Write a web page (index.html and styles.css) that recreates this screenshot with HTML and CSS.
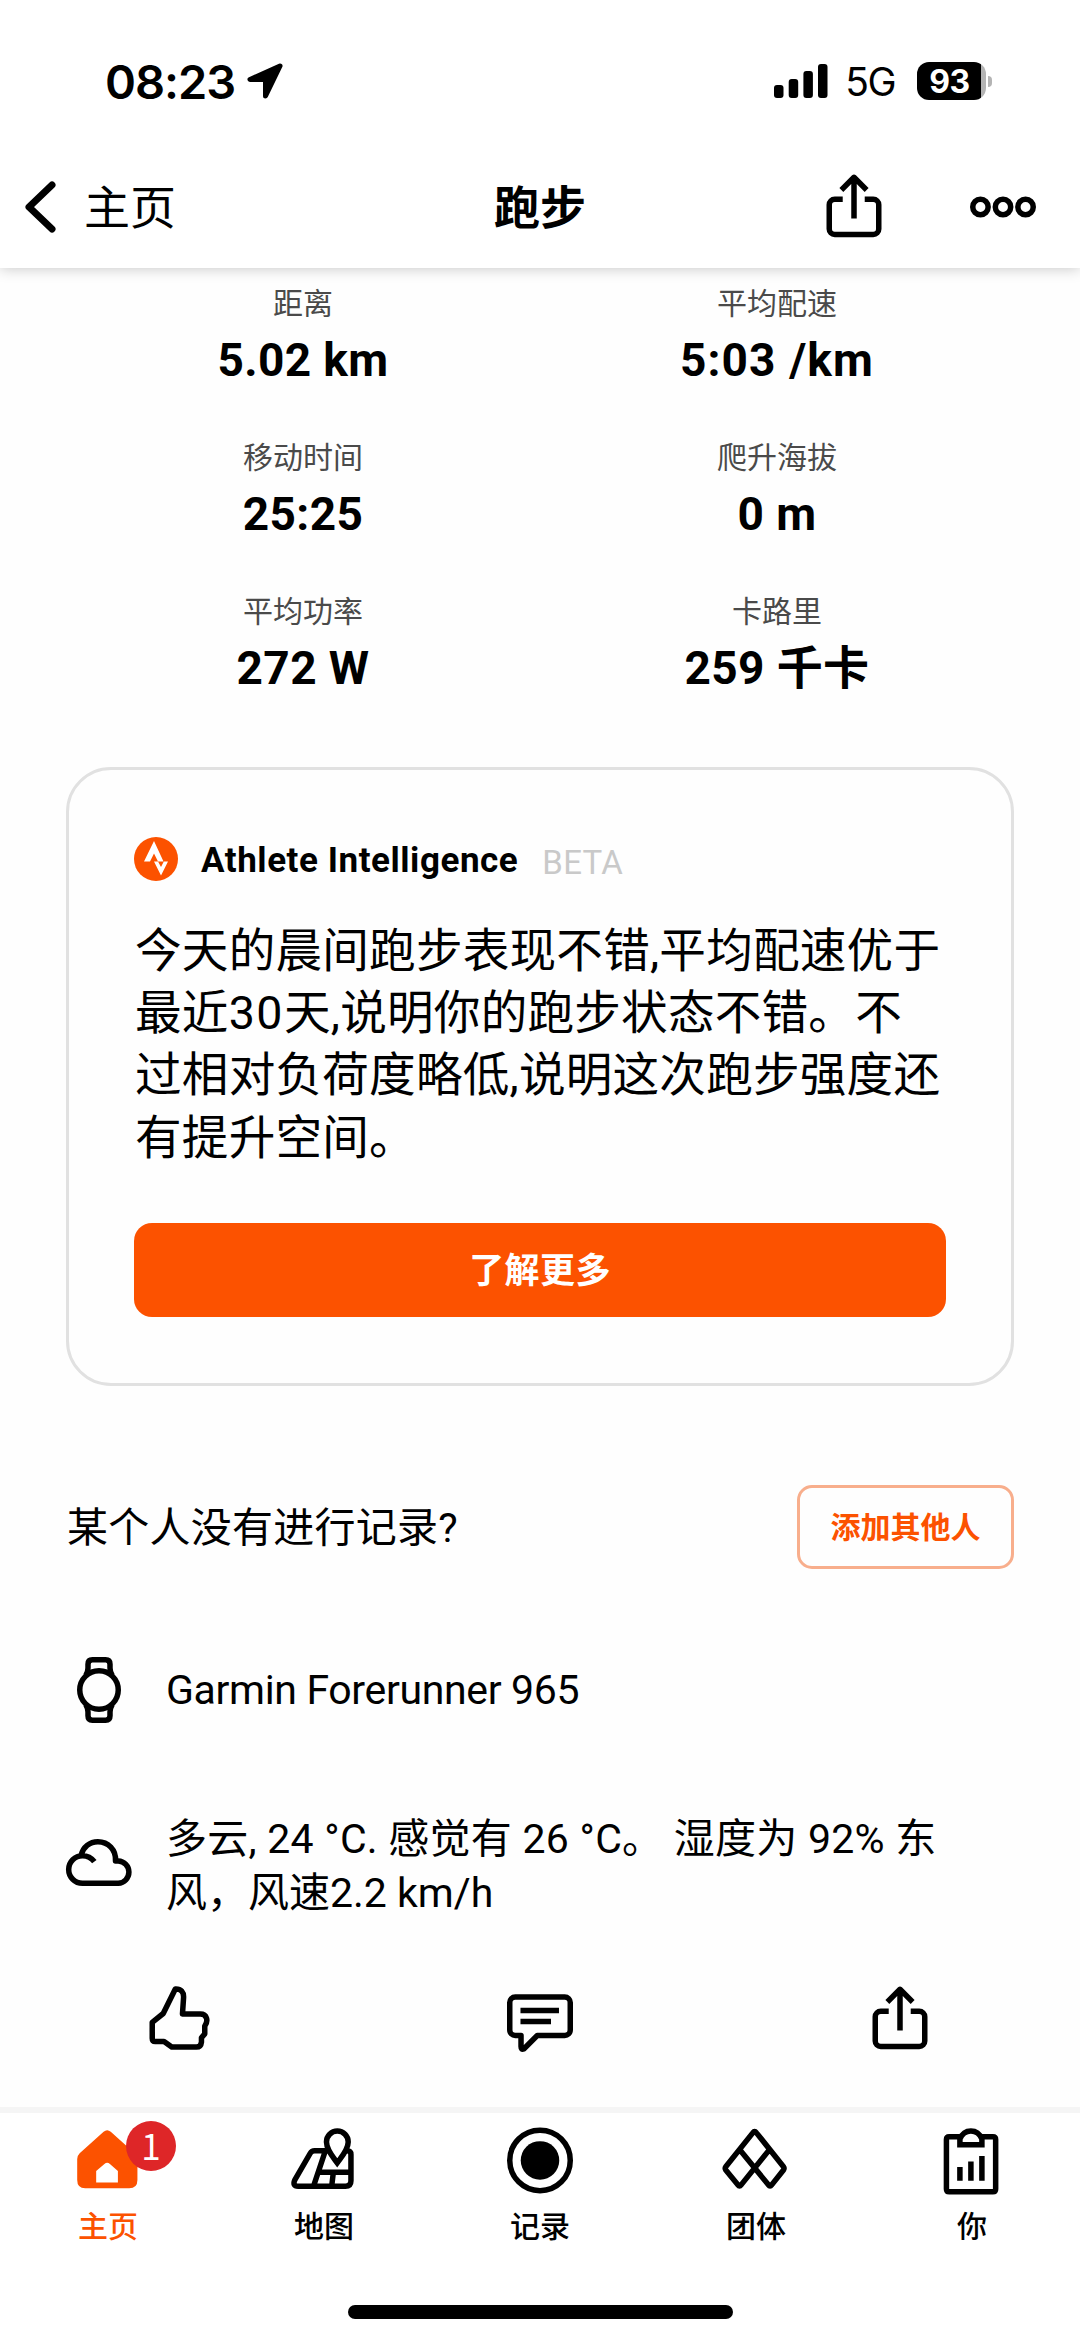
FILE: index.html
```html
<!DOCTYPE html>
<html lang="zh-CN">
<head>
<meta charset="utf-8">
<title>跑步</title>
<link rel="stylesheet" href="styles.css">
</head>
<body>
<div class="screen">
  <header class="header">
    <div class="status">
      <div class="status-left">
        <span class="clock">08:23</span>
        <svg class="location" viewBox="0 0 36 36"><path d="M33 3 L3 16.5 H18.5 V33 Z" fill="#000" stroke="#000" stroke-width="5" stroke-linejoin="round"/></svg>
      </div>
      <div class="status-right">
        <svg class="signal" viewBox="0 0 54 36"><rect x="0" y="22" width="9.5" height="13" rx="3"/><rect x="14.7" y="16" width="9.5" height="19" rx="3"/><rect x="29.4" y="8" width="9.5" height="27" rx="3"/><rect x="44" y="1" width="9.5" height="34" rx="3"/></svg>
        <span class="network">5G</span>
        <div class="battery"><span>93</span></div>
        <i class="battery-nub"></i>
      </div>
    </div>
    <nav class="nav">
      <a class="back">
        <svg class="chevron" viewBox="0 0 31 52"><path d="M27 4 L4 26 L27 48"/></svg>
        <span>主页</span>
      </a>
      <h1 class="title">跑步</h1>
      <div class="nav-actions">
        <svg class="icon" viewBox="0 0 24 24"><path d="M7.9 9.2H5a2 2 0 0 0-2 2V20a2 2 0 0 0 2 2H19a2 2 0 0 0 2-2V11.2a2 2 0 0 0-2-2H15.9M12 16.2V1.4M7.4 5.8 12 1.2l4.6 4.6"/></svg>
        <svg class="icon" viewBox="0 0 24 24"><circle cx="3.8" cy="12" r="2.8"/><circle cx="12" cy="12" r="2.8"/><circle cx="20.2" cy="12" r="2.8"/></svg>
      </div>
    </nav>
  </header>

  <main class="content">
    <section class="stats">
      <div class="stat"><span class="label">距离</span><b class="value">5.02 km</b></div>
      <div class="stat"><span class="label">平均配速</span><b class="value pace">5:03 /km</b></div>
      <div class="stat"><span class="label">移动时间</span><b class="value">25:25</b></div>
      <div class="stat"><span class="label">爬升海拔</span><b class="value">0 m</b></div>
      <div class="stat"><span class="label">平均功率</span><b class="value">272 W</b></div>
      <div class="stat"><span class="label">卡路里</span><b class="value">259 千卡</b></div>
    </section>

    <section class="card">
      <div class="card-head">
        <svg class="logo" viewBox="0 0 44 44"><circle cx="22" cy="22" r="22" fill="#fc5200"/><path fill="#fff" d="M20 4 L10 24.5 H16 L20 16.5 L24 24.5 H29.5 Z"/><path fill="#fff" d="M20 24.5 L27 38.5 L34 24.5 H29.8 L27 30 L24 24.5 Z"/></svg>
        <span class="card-title">Athlete Intelligence</span>
        <span class="beta">BETA</span>
      </div>
      <p class="summary">今天的晨间跑步表现不错,平均配速优于<br>最近<span class="number">30</span>天,说明你的跑步状态不错。不<br>过相对负荷度略低,说明这次跑步强度还<br>有提升空间。</p>
      <button class="more">了解更多</button>
    </section>

    <section class="others">
      <span class="others-text">某个人没有进行记录?</span>
      <button class="add">添加其他人</button>
    </section>

    <section class="detail device">
      <svg class="icon" viewBox="0 0 24 24"><circle cx="12" cy="12" r="7"/><path d="M7.2 6.7C7.8 5.7 8 5 8 4V2.6Q8 1 9.6 1H14.4Q16 1 16 2.6V4c0 1 .2 1.7.8 2.7M7.2 17.3C7.8 18.3 8 19 8 20v1.4Q8 23 9.6 23H14.4Q16 23 16 21.4V20c0-1 .2-1.7.8-2.7"/></svg>
      <span class="detail-text">Garmin Forerunner 965</span>
    </section>
    <section class="detail weather">
      <svg class="icon" viewBox="0 0 24 24"><path d="M10.3 11.9C9.2 10.4 7.8 9.7 6 9.7A5 5 0 0 0 6 19.75H19A4.08 4.08 0 0 0 19 11.6H18C18.3 7.5 15.3 4.6 11.6 4.6 8.6 4.6 6.2 6.5 5.5 9.5"/></svg>
      <span class="detail-text"><span class="conditions">多云, 24 °C. 感觉有 26 °C。 湿度为 92% 东</span><br>风，风速2.2 km/h</span>
    </section>

    <section class="actions">
      <svg class="icon" viewBox="0 0 24 24"><path d="M10.3 1.1C12.4 1 13.4 2.2 13.3 4.2L12.9 10.2H19.4C21.8 10.2 22.4 12.6 21 14.6V17.4L19.8 18.8V20.4Q19.6 22.2 18 22.2H9L6.2 20.2H3Q1.9 20.2 1.9 19V13.2L5.9 10Z"/></svg>
      <svg class="icon" viewBox="0 0 24 24"><path d="M5.1 18H3A2 2 0 0 1 1 16V6A2 2 0 0 1 3 4H21A2 2 0 0 1 23 6V16A2 2 0 0 1 21 18H11L6.1 22.9Q5.1 23.3 5.1 22ZM4.9 8.9H18.9M4.9 12.9H16"/></svg>
      <svg class="icon" viewBox="0 0 24 24"><path d="M7.9 9.2H5a2 2 0 0 0-2 2V20a2 2 0 0 0 2 2H19a2 2 0 0 0 2-2V11.2a2 2 0 0 0-2-2H15.9M12 16.2V1.4M7.4 5.8 12 1.2l4.6 4.6"/></svg>
    </section>
  </main>

  <footer class="tabbar">
    <div class="tabs">
      <a class="tab active">
        <span class="tab-icon">
          <svg class="icon" viewBox="0 0 24 24"><path class="solid" fill-rule="evenodd" d="M10.4 2.1Q11.7 1 13 2.1L21.7 9.9Q22.7 10.8 22.7 12V19.6Q22.7 22.6 19.7 22.6H3.7Q.8 22.6 .8 19.6V12Q.8 10.8 1.7 9.9ZM7.7 20.5H15.6V16.4L12.7 13.8Q11.7 13 10.7 13.8L7.7 16.4Z"/></svg>
          <i class="badge">1</i>
        </span>
        <span>主页</span>
      </a>
      <a class="tab">
        <svg class="icon" viewBox="0 0 24 24"><path d="M12.5 9H8.6Q7.5 9 7 9.9L1.4 19.6Q.4 21.9 2.6 21.9H19.8Q21.8 21.9 21.8 19.9V10.4Q21.8 9 20.4 9H12.5L8.2 21.9M9.9 16.8H21.8M15.4 16.8 14.8 21.9"/><path fill="#fff" d="M16.8 13.4C15.2 11.2 12.9 8.6 12.9 5.8A3.95 3.95 0 0 1 20.8 5.8C20.8 8.6 18.4 11.2 16.8 13.4Z" stroke-linejoin="miter"/></svg>
        <span>地图</span>
      </a>
      <a class="tab">
        <svg class="icon" viewBox="0 0 24 24"><circle cx="12" cy="12.5" r="11"/><circle class="solid" cx="12" cy="12.5" r="7"/></svg>
        <span>记录</span>
      </a>
      <a class="tab">
        <svg class="icon" viewBox="0 0 24 24"><path d="M10.9 2.4Q11.5 1.6 12.1 2.4L22 14.8Q22.4 15.4 22 16L17.7 21.4Q17.1 22.2 16.5 21.4L6.1 8.6M16.9 8.6 6.6 21.4Q6 22.2 5.4 21.4L1 16Q.6 15.4 1 14.8L10.9 2.4"/></svg>
        <span>团体</span>
      </a>
      <a class="tab">
        <svg class="icon" viewBox="0 0 24 24"><path d="M7.6 3.9H3.7Q2.7 3.9 2.7 4.9V22.9Q2.7 23.9 3.7 23.9H19.6Q20.6 23.9 20.6 22.9V4.9Q20.6 3.9 19.6 3.9H15.6M7.6 19.9V14.9M11.6 19.9V12.9M15.6 19.9V10.9"/><path stroke-linejoin="miter" d="M7.6 6.8V4.7C9.2 .8 14 .8 15.6 4.7V6.8Z"/></svg>
        <span>你</span>
      </a>
    </div>
    <div class="home-indicator"></div>
  </footer>
</div>
</body>
</html>
```
FILE: styles.css
```css
* { box-sizing: border-box; }
body {
  margin: 0;
  background: #fff;
  color: #000;
  font-family: Roboto, "Noto Sans CJK SC", sans-serif;
}
.screen { width: 1080px; height: 2341px; display: flex; flex-direction: column; background: #fefefe; overflow: hidden; }
button { font-family: inherit; padding: 0; }

.icon { width: 66px; height: 66px; flex: none; display: block; fill: none; stroke: #000; stroke-width: 2; stroke-linejoin: round; overflow: visible; }
.icon .solid { fill: currentColor; stroke: none; }

.header { height: 268px; flex: none; position: relative; background: #fff; box-shadow: 0 0 14px rgba(0, 0, 0, .24); }
.status { height: 162px; padding: 0 88px 0 105px; display: flex; align-items: center; justify-content: space-between; font-family: Inter, sans-serif; }
.status-left, .status-right { display: flex; align-items: center; }
.clock { font-size: 47px; font-weight: 600; letter-spacing: -1px; }
.location { width: 36px; height: 36px; margin-left: 12px; }
.signal { width: 54px; height: 36px; }
.network { font-size: 39px; margin-left: 17px; letter-spacing: -1.5px; }
.battery { width: 69px; height: 38px; margin-left: 22px; border-radius: 12px; background: linear-gradient(90deg, #000 64px, #b4b4b4 64px); display: flex; align-items: center; justify-content: center; color: #fff; font-size: 32px; font-weight: 700; letter-spacing: -.5px; padding-right: 4px; }
.battery-nub { width: 4px; height: 11px; margin-left: 2px; border-radius: 0 6px 6px 0; background: #b4b4b4; }

.nav { height: 90px; padding: 0 25px; display: grid; grid-template-columns: 1fr 200px 1fr; align-items: center; }
.back { display: flex; align-items: center; gap: 28px; font-size: 46px; }
.back span, .title { padding-bottom: 6px; }
.chevron { width: 31px; height: 52px; fill: none; stroke: #000; stroke-width: 7; stroke-linecap: round; stroke-linejoin: round; }
.title { margin: 0; text-align: center; font-size: 46px; font-weight: 700; }
.nav-actions { display: flex; justify-content: flex-end; gap: 83px; padding-right: 19px; }

.content { flex: 1; padding: 16px 66px 0; }
.stats { display: grid; grid-template-columns: 1fr 1fr; grid-auto-rows: 154px; height: 483px; }
.stat { display: flex; flex-direction: column; align-items: center; gap: 9px; }
.label { font-size: 30px; line-height: 40px; color: #4a4a4a; }
.value { font-size: 46px; line-height: 54px; font-weight: 700; letter-spacing: .4px; }
.pace { letter-spacing: 1.1px; }

.card { height: 619px; border: 3px solid #e1e1e1; border-radius: 45px; padding: 64px 65px 0; display: flex; flex-direction: column; }
.card-head { display: flex; align-items: center; height: 50px; }
.logo { width: 44px; height: 44px; }
.card-title { font-size: 35px; font-weight: 700; margin-left: 23px; padding-top: 3px; line-height: 50px; letter-spacing: .55px; }
.beta { font-size: 33px; color: #c9c9c9; margin-left: 24px; padding-top: 7px; line-height: 50px; letter-spacing: .3px; }
.summary { margin: 36px 0 0 1px; font-size: 46.6px; line-height: 62.2px; height: 249px; white-space: nowrap; letter-spacing: .22px; }
.number { letter-spacing: 1.5px; }
.more { margin-top: 54px; height: 94px; border: 0; border-radius: 18px; background: #fc5200; color: #fff; font-size: 35px; font-weight: 700; letter-spacing: .4px; padding-bottom: 5px; }

.others { margin-top: 99px; height: 84px; display: flex; align-items: center; justify-content: space-between; }
.others-text { font-size: 41px; letter-spacing: .25px; padding: 0 0 7px 1px; }
.add { width: 217px; height: 84px; border: 3px solid #f8ae8c; border-radius: 15px; background: none; color: #fc5200; font-size: 30px; font-weight: 700; padding-bottom: 5px; }

.detail { display: flex; align-items: center; gap: 34px; font-size: 41px; line-height: 54px; white-space: nowrap; }
.device { margin-top: 88px; height: 66px; letter-spacing: -.35px; }
.weather { margin-top: 89px; height: 108px; }
.weather .icon { margin-bottom: 9px; }
.conditions { letter-spacing: .26px; }

.actions { display: grid; grid-template-columns: repeat(3, 1fr); justify-items: center; margin: 66px -66px 0; }

.tabbar { height: 234px; flex: none; border-top: 6px solid #f5f5f5; background: #fff; display: flex; flex-direction: column; align-items: center; }
.tabs { width: 100%; display: grid; grid-template-columns: repeat(5, 1fr); padding-top: 13px; }
.tab { display: flex; flex-direction: column; align-items: center; gap: 13px; font-size: 30px; line-height: 44px; font-weight: 500; }
.tab-icon { position: relative; }
.active { color: #fc5200; }
.badge { position: absolute; left: 51px; top: -5px; width: 50px; height: 50px; border-radius: 50%; background: #de2628; color: #fff; font: 400 35px/48px "Noto Sans CJK SC", sans-serif; text-align: center; }
.home-indicator { width: 385px; height: 14px; border-radius: 7px; background: #000; margin-top: 56px; }
```
